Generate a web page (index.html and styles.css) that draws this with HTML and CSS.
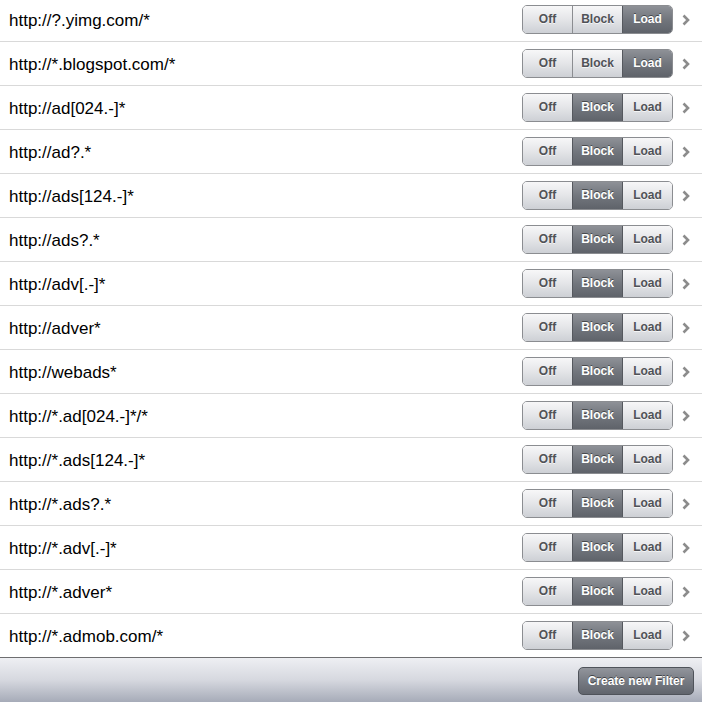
FILE: index.html
```html
<!DOCTYPE html>
<html>
<head>
<meta charset="utf-8">
<link rel="stylesheet" href="styles.css">
</head>
<body>
<div class="page">
  <ul class="list" id="list"></ul>
  <div class="toolbar">
    <button class="tb-button">Create new Filter</button>
  </div>
</div>
<script>
var rows = [
  ["http://?.yimg.com/*", 2],
  ["http://*.blogspot.com/*", 2],
  ["http://ad[024.-]*", 1],
  ["http://ad?.*", 1],
  ["http://ads[124.-]*", 1],
  ["http://ads?.*", 1],
  ["http://adv[.-]*", 1],
  ["http://adver*", 1],
  ["http://webads*", 1],
  ["http://*.ad[024.-]*/*", 1],
  ["http://*.ads[124.-]*", 1],
  ["http://*.ads?.*", 1],
  ["http://*.adv[.-]*", 1],
  ["http://*.adver*", 1],
  ["http://*.admob.com/*", 1]
];
var labels = ["Off", "Block", "Load"];
var list = document.getElementById("list");
rows.forEach(function (r) {
  var li = document.createElement("li");
  li.className = "row";
  var t = document.createElement("span");
  t.className = "row-text";
  t.textContent = r[0];
  li.appendChild(t);
  var seg = document.createElement("div");
  seg.className = "seg";
  labels.forEach(function (l, i) {
    var s = document.createElement("span");
    s.className = "seg-item" + (i === r[1] ? " on" : "");
    s.textContent = l;
    seg.appendChild(s);
  });
  li.appendChild(seg);
  var ch = document.createElementNS("http://www.w3.org/2000/svg", "svg");
  ch.setAttribute("class", "chev");
  ch.setAttribute("width", "10");
  ch.setAttribute("height", "14");
  ch.setAttribute("viewBox", "0 0 10 14");
  ch.innerHTML = '<polyline points="2.5,2.5 7,7 2.5,11.5" fill="none" stroke="#8c8c8c" stroke-width="2.6" stroke-linecap="butt"/>';
  li.appendChild(ch);
  list.appendChild(li);
});
</script>
</body>
</html>
```

FILE: styles.css
```css
html, body {
  margin: 0;
  padding: 0;
  background: #ffffff;
}
body {
  width: 702px;
  height: 702px;
  overflow: hidden;
  font-family: "Liberation Sans", Arial, sans-serif;
}
.page {
  display: flex;
  flex-direction: column;
}
.list {
  list-style: none;
  margin: -2px 0 0 0;
  padding: 0;
}
.row {
  box-sizing: border-box;
  height: 44px;
  border-bottom: 1px solid #d9d9d9;
  display: flex;
  align-items: center;
  padding: 0 11px 0 9px;
}
.row:last-child {
  border-bottom-color: #6e6e70;
}
.row-text {
  flex: 1;
  font-size: 17px;
  color: #000;
  padding-top: 2px;
}
.seg {
  display: flex;
  height: 29px;
  box-sizing: border-box;
  border: 1px solid #8b8d91;
  border-radius: 5px;
  overflow: hidden;
  margin-right: 8px;
  margin-top: -1px;
}
.seg-item {
  width: 49px;
  display: flex;
  align-items: center;
  justify-content: center;
  font-size: 12px;
  font-weight: bold;
  color: #505257;
  background: linear-gradient(#f7f7f8, #e4e5e8 50%, #cdd0d5);
  border-left: 1px solid #8b8d91;
  text-shadow: 0 1px 0 rgba(255,255,255,0.7);
}
.seg-item:first-child {
  border-left: none;
}
.seg-item.on {
  color: #ffffff;
  background: linear-gradient(#8e9197, #72767d 50%, #5f636a);
  text-shadow: 0 -1px 0 rgba(0,0,0,0.45);
  border-left-color: #55585e;
}
.seg-item.on + .seg-item {
  border-left-color: #55585e;
}
.chev {
  display: block;
}
.toolbar {
  height: 44px;
  box-sizing: border-box;
  background: linear-gradient(#eeeff3, #d6d8df 50%, #a6abb8);
  display: flex;
  align-items: center;
  justify-content: flex-end;
  padding-right: 8px;
}
.tb-button {
  height: 28px;
  width: 116px;
  box-sizing: border-box;
  border: 1px solid #4f535a;
  border-radius: 5px;
  background: linear-gradient(#92959c, #777b83 50%, #61656d);
  color: #ffffff;
  font-family: "Liberation Sans", Arial, sans-serif;
  font-size: 12px;
  font-weight: bold;
  text-shadow: 0 -1px 0 rgba(0,0,0,0.5);
  padding: 0;
  margin-top: 1px;
}
```
